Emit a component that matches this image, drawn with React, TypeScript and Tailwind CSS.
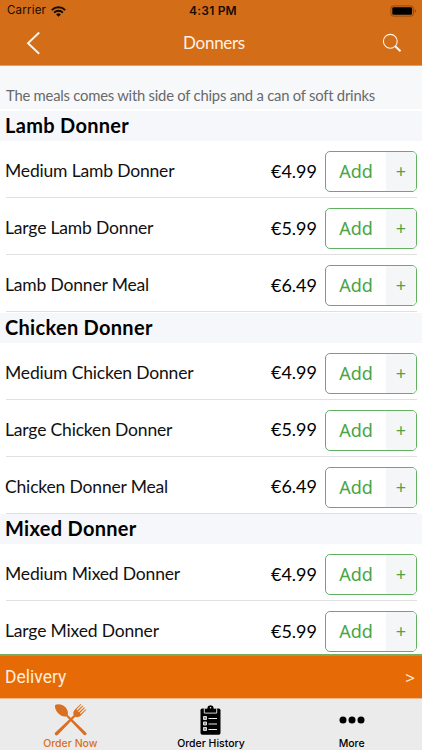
import { useState } from 'react'

interface MenuItem {
  name: string
  price: string
}

interface MenuSection {
  title: string
  items: MenuItem[]
}

const sections: MenuSection[] = [
  {
    title: 'Lamb Donner',
    items: [
      { name: 'Medium Lamb Donner', price: '€4.99' },
      { name: 'Large Lamb Donner', price: '€5.99' },
      { name: 'Lamb Donner Meal', price: '€6.49' },
    ],
  },
  {
    title: 'Chicken Donner',
    items: [
      { name: 'Medium Chicken Donner', price: '€4.99' },
      { name: 'Large Chicken Donner', price: '€5.99' },
      { name: 'Chicken Donner Meal', price: '€6.49' },
    ],
  },
  {
    title: 'Mixed Donner',
    items: [
      { name: 'Medium Mixed Donner', price: '€4.99' },
      { name: 'Large Mixed Donner', price: '€5.99' },
    ],
  },
]

function WifiIcon() {
  return (
    <svg width="15" height="11" viewBox="0 0 14 10" fill="none" stroke="#170b02">
      <path d="M.7 3.7a9 9 0 0 1 12.6 0" strokeWidth="1.9" />
      <path d="M2.9 6a5.9 5.9 0 0 1 8.2 0" strokeWidth="1.8" />
      <path d="M7 9.9 4.8 7.7a3.1 3.1 0 0 1 4.4 0Z" fill="#170b02" stroke="none" />
    </svg>
  )
}

function BatteryIcon() {
  return (
    <svg width="27" height="12" viewBox="0 0 27 12" fill="none">
      <rect x=".9" y=".9" width="22.6" height="10.2" rx="2.4" stroke="#8f4a12" />
      <rect x="2.3" y="2.3" width="19.8" height="7.4" rx="1.2" fill="#000" />
      <path d="M24.8 4.2c1.4.5 1.4 3.1 0 3.6Z" fill="#7d3f0e" />
    </svg>
  )
}

function CutleryIcon() {
  return (
    <svg width="33" height="33" viewBox="0 0 33 33" fill="#d97021">
      {/* Spoon */}
      <path d="M1.2 2C4 .5 8.8 1.3 11.5 4.3c2.1 2.3 2.8 5.1 2.3 7.6L32 29.4c1.5 1.6-.6 3.9-2.3 2.4L12.2 13.2c-2.4.7-5.1-.1-7.2-2.2C1.8 7.9.4 4.4 1.2 2Z" />
      {/* Fork */}
      <path d="M1.3 29.5 19.7 12.2c-.9-2.2-.1-4.1 1.3-5.6L26.7.9l.6.6-4.9 5.3.8.8 5.3-5 .6.6-5 5.3.8.8L30.2 4.3l.6.6-5 5.3.8.8 5.1-4.8.6.6-5.5 5.7c-1.6 1.6-3.7 2.2-5.6 1.3L3.7 31.9c-1.7 1.5-3.9-.8-2.4-2.4Z" />
    </svg>
  )
}

function ClipboardIcon() {
  return (
    <svg width="21" height="30" viewBox="0 0 21 30">
      <rect x=".5" y="3.5" width="20" height="26.2" rx="1.8" fill="#000" />
      <path
        d="M4.3 3.2h2.9C7.4-.9 13.6-.9 13.8 3.2h2.9v4.9H4.3Z"
        fill="#000"
        stroke="#ebebeb"
        strokeWidth=".9"
      />
      <path d="M7.5 2.9C8-.2 13-.2 13.5 2.9Z" fill="#000" />
      <circle cx="10.5" cy="2.7" r=".8" fill="#ebebeb" />
      <g fill="none" stroke="#ebebeb" strokeWidth=".9">
        <path d="M3.5 11.5h3v3h-3ZM3.5 17h3v3h-3ZM3.5 22.5h3v3h-3Z" fill="#999" />
        <path d="M8.5 13.5h8.5M8.5 19h8.5M8.5 24.5h8.5" strokeWidth="1.1" />
      </g>
    </svg>
  )
}

function AddButton({ onClick }: { onClick: () => void }) {
  return (
    <button
      onClick={onClick}
      className="flex h-[41px] w-[92px] shrink-0 overflow-hidden rounded-[5px] border border-[#62b062] bg-white text-[#4aa546]"
    >
      <span className="flex h-full w-[60px] items-center justify-center font-['Noto_Sans',sans-serif] text-[18px]">
        Add
      </span>
      <span className="flex h-full flex-1 items-center justify-center bg-[#f4f6f8] font-['Noto_Sans',sans-serif] text-[18px]">
        +
      </span>
    </button>
  )
}

export default function App() {
  const [, setCart] = useState<string[]>([])

  return (
    <div className="flex h-[750px] w-[422px] flex-col overflow-hidden bg-white font-['Lato',sans-serif] text-black">
      {/* Header */}
      <header className="h-[66px] shrink-0 border-b border-[#dfa06b] bg-[#d46d17]">
        <div className="grid h-[22px] grid-cols-3 items-center pr-[5px] pl-[7px] font-['Inter',sans-serif] text-[12px] text-[#170b02]">
          <div className="flex items-center gap-[5px]">
            <span className="text-[11.5px] tracking-[0.2px]">Carrier</span>
            <WifiIcon />
          </div>
          <span className="pl-0.5 text-center font-semibold tracking-[0.2px] whitespace-nowrap">4:31 PM</span>
          <div className="flex justify-end">
            <BatteryIcon />
          </div>
        </div>
        <div className="grid h-[42px] grid-cols-3 items-center pr-[20px] pl-[26px]">
          <svg width="15" height="24" viewBox="0 0 15 24" fill="none" stroke="#fff4ea" strokeWidth="1.9">
            <path d="M13.2 1.5 2 12.2l11.2 10.5" />
          </svg>
          <h1 className="text-center text-[17px] tracking-[-0.3px] text-[#fff1e4]">Donners</h1>
          <svg className="justify-self-end" width="20" height="20" viewBox="0 0 20 20" fill="none" stroke="#fff4ea">
            <circle cx="8.3" cy="8.3" r="6.9" strokeWidth="1.1" />
            <path d="m13.3 13.3 5.2 5" strokeWidth="2" />
          </svg>
        </div>
      </header>

      {/* Menu */}
      <main className="min-h-0 flex-1 overflow-hidden">
        <p className="mb-[2px] h-[43px] bg-[#f7f8fa] pt-[19px] pl-[6px] text-[14.8px] leading-[21px] tracking-[-0.22px] whitespace-nowrap text-[#68696b]">
          The meals comes with side of chips and a can of soft drinks
        </p>
        {sections.map((section) => (
          <section key={section.title} className="mb-[0.5px]">
            <h2 className="h-[30px] bg-[#f6f7fa] pl-[5px] text-[20px] leading-[28px] font-bold tracking-[0.3px]">
              {section.title}
            </h2>
            {section.items.map((item) => (
              <div
                key={item.name}
                className="mr-[5px] ml-[6px] flex h-[57px] items-center border-b border-[#e0e0e0] pt-[9px] pb-[4px]"
              >
                <span className="-ml-px flex-1 text-[17.5px] tracking-[-0.17px] text-[#111]">{item.name}</span>
                <span className="mr-[8px] pb-px text-[18px]">{item.price}</span>
                <AddButton onClick={() => setCart((cart) => [...cart, item.name])} />
              </div>
            ))}
          </section>
        ))}
      </main>

      {/* Delivery bar */}
      <button className="flex h-[45px] shrink-0 items-center justify-between border-t-2 border-b border-t-[#78ad5c] border-b-[#efb98a] bg-[#e66a06] pr-[7px] pl-[5px] text-[#ffeddd]">
        <span className="font-['Roboto',sans-serif] text-[17.5px]">Delivery</span>
        <span className="pt-0.5 font-['Noto_Sans',sans-serif] text-[17px]">&gt;</span>
      </button>

      {/* Tabs */}
      <nav className="grid h-[51px] shrink-0 grid-cols-3 bg-[#ebebeb] font-['Inter',sans-serif] text-[10.5px] font-medium">
        <div className="flex flex-col items-center text-[#d97021]">
          <div className="flex h-[39px] items-center pt-[2px]">
            <CutleryIcon />
          </div>
          <span className="leading-[11px]">Order Now</span>
        </div>
        <div className="flex flex-col items-center">
          <div className="flex h-[39px] items-center pt-[2px]">
            <ClipboardIcon />
          </div>
          <span className="leading-[11px]">Order History</span>
        </div>
        <div className="flex flex-col items-center">
          <div className="flex h-[39px] items-center pt-[2px]">
            <svg width="26" height="8" viewBox="0 0 26 8">
              <circle cx="4" cy="4" r="3.5" />
              <circle cx="13" cy="4" r="3.5" />
              <circle cx="22" cy="4" r="3.5" />
            </svg>
          </div>
          <span className="leading-[11px]">More</span>
        </div>
      </nav>
    </div>
  )
}
